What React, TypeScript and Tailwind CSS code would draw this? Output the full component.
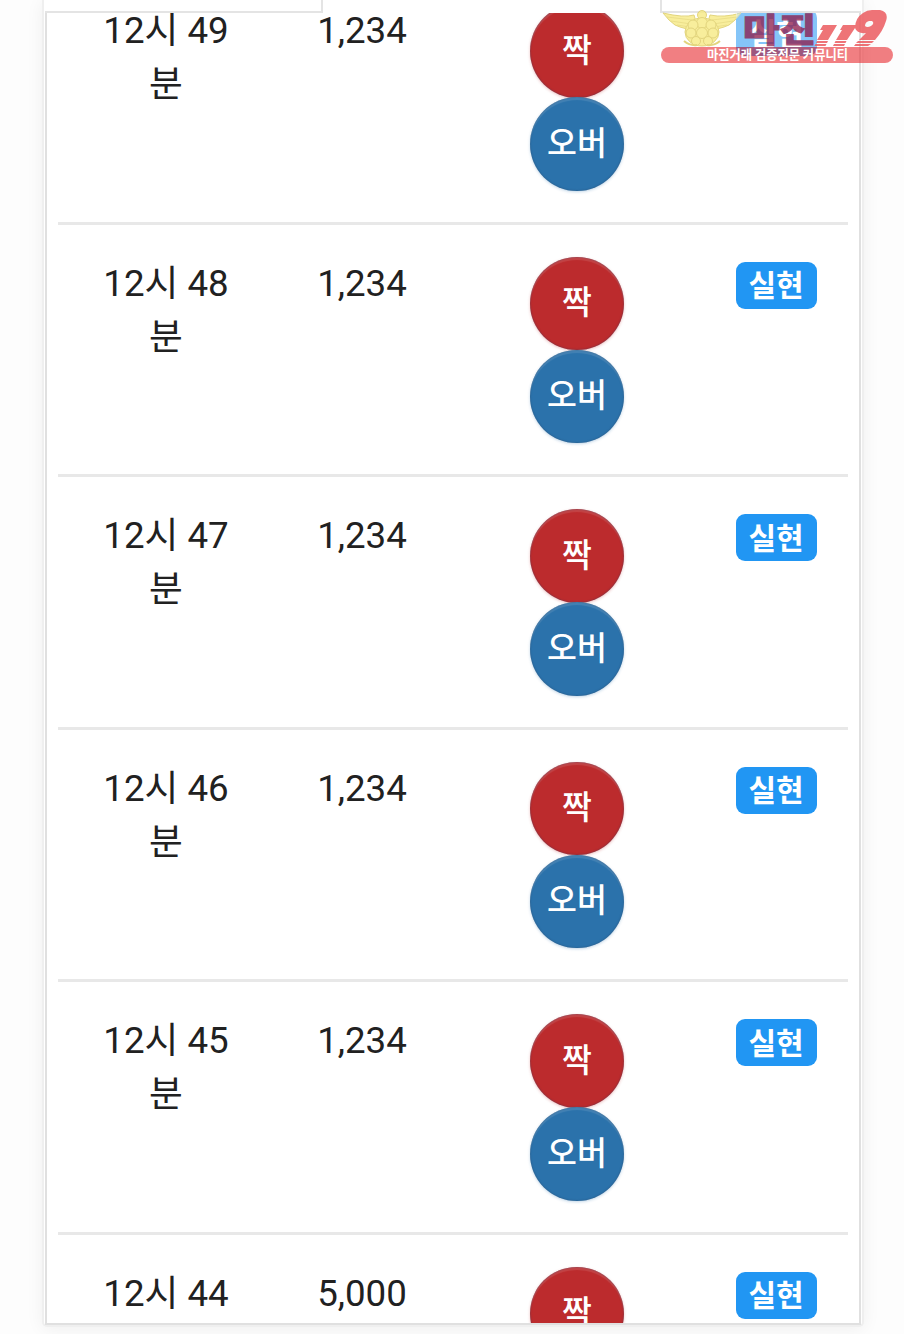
import React from 'react';

interface Entry {
  minute: number;
  amount: string;
}

const ENTRIES: Entry[] = [
  { minute: 49, amount: '1,234' },
  { minute: 48, amount: '1,234' },
  { minute: 47, amount: '1,234' },
  { minute: 46, amount: '1,234' },
  { minute: 45, amount: '1,234' },
  { minute: 44, amount: '5,000' },
];

const Ball: React.FC<{ className: string; children: React.ReactNode }> = ({ className, children }) => (
  <div className={`flex h-[93.5px] w-[94px] shrink-0 items-center justify-center rounded-full pb-[6px] font-["Noto_Sans_CJK_KR",sans-serif] text-[32.5px] font-medium leading-none text-white ${className}`}>
    {children}
  </div>
);

const Row: React.FC<{ entry: Entry }> = ({ entry }) => (
  <div className="grid h-[252.5px] shrink-0 grid-cols-[216px_176px_254px_144px] border-b-[3px] border-[#e8e8e8] pt-[32px] text-center text-[36.7px] leading-[54px] text-[#212121]">
    <div>
      12시 {entry.minute}
      {entry.minute > 44 && (
        <>
          <br />분
        </>
      )}
    </div>
    <div>{entry.amount}</div>
    <div className="flex flex-col items-center">
      <Ball className="bg-[#bc2b2d] shadow-[0_1px_3px_rgba(188,43,45,0.3),inset_0_3px_1px_rgba(255,255,255,0.12),inset_0_0_2px_rgba(30,60,100,0.6)]">짝</Ball>
      {entry.minute > 44 && (
        <Ball className="-mt-[0.5px] bg-[#2b72ab] shadow-[0_1px_3px_rgba(43,114,171,0.3),inset_0_3px_1px_rgba(255,255,255,0.12),inset_0_0_2px_rgba(40,60,90,0.6)]">오버</Ball>
      )}
    </div>
    <div className="flex items-start justify-center pt-[5px]">
      <span className="flex h-[47px] w-[81px] items-center justify-center rounded-[9px] bg-[#2196f3] pt-[2px] text-[30px] font-bold leading-none text-white">
        실현
      </span>
    </div>
  </div>
);

const Watermark: React.FC = () => (
  <svg className="absolute left-[655px] top-[4px] h-[62px] w-[245px]" viewBox="655 4 245 62">
    {/* winged emblem */}
    <g fill="#f7ea84" stroke="#dccb5e" strokeWidth="1" opacity="0.8">
      <path d="M663 13 Q684 18 694 15 L698 29 L687 29 L680 27 L675 25 L669 20 Z" />
      <path d="M741 13 Q724 18 710 15 L706 29 L717 29 L724 27 L729 25 L735 20 Z" />
      <path d="M667 17 L692 20 M671 21 L691 24 M677 25 L690 27 M737 17 L712 20 M733 21 L713 24 M727 25 L714 27" fill="none" strokeWidth="0.6" />
      <ellipse cx="702" cy="32" rx="17" ry="14" />
      <circle cx="702" cy="15" r="4.5" />
      <circle cx="702" cy="23" r="5.5" />
      <circle cx="693" cy="25" r="5" />
      <circle cx="711" cy="25" r="5" />
      <circle cx="691" cy="33" r="5" />
      <circle cx="702" cy="33" r="5.5" />
      <circle cx="713" cy="33" r="5" />
      <circle cx="696" cy="41" r="4.5" />
      <circle cx="708" cy="41" r="4.5" />
      <path d="M684 41 Q690 46 697 45 M720 41 Q714 46 707 45" fill="none" strokeWidth="2" />
    </g>
    {/* pale backing of the wordmark */}
    <path d="M736 13 H817 V47 H736 Z" fill="#fff" opacity="0.45" />
    <rect x="661" y="47" width="232" height="16" rx="8" fill="#e93035" opacity="0.62" />
    <text x="743" y="0" transform="translate(0 42) scale(1 0.87)" fontSize="38" fontWeight="900" textLength="73" lengthAdjust="spacingAndGlyphs" fill="#8c1848" stroke="#8c1848" strokeWidth="1.2" opacity="0.75" className="font-['Noto_Sans_CJK_KR',sans-serif]">
      마진
    </text>
    {/* slanted 119 with speed lines */}
    <g fill="#ec5c60" opacity="0.85">
      <path d="M823 25 H837 L828 40 H817 L823 30 H820 Z" />
      <path d="M843 25 H857 L847 40 H836 L842 30 H840 Z" />
      <path d="M817 41 H828 L827 43 H816 Z M815.5 44 H826.5 L825.5 46 H814.5 Z M835.5 41 H846.5 L845.5 43 H834.5 Z M834 44 H845 L844 46 H833 Z" />
      <path fillRule="evenodd" d="M872 10 H880 Q889 12 886 21 Q883 31 875 40 H859 L866 33 Q857 34 855 28 Q855 18 863 13 Q867 10 872 10 Z M869 21 Q865 22 865 26 Q867 28 871 26 Q875 23 872 21 Z" />
      <path d="M858 41 H874 L872 43 H856 Z M855.5 44 H871 L868 46 H854 Z" />
    </g>
    <text x="707" y="59" fontSize="13" fontWeight="700" textLength="141" lengthAdjust="spacingAndGlyphs" fill="#fff" className="font-['Noto_Sans_CJK_KR',sans-serif]">
      마진거래 검증전문 커뮤니티
    </text>
  </svg>
);

const App: React.FC = () => (
  <div className="h-[1334px] w-[904px] overflow-hidden bg-[#fdfdfd] font-[Roboto,'Noto_Sans_CJK_KR',sans-serif]">
    <div className="ml-[42px] h-[1327px] w-[822px] rounded-b-[5px] border-x-2 border-b-2 border-[#efefef] bg-white px-px shadow-[0_2px_18px_rgba(0,0,0,0.06)]">
      {/* bottoms of the header fields */}
      <div className="flex h-[13px] justify-between">
        <div className="w-[278px] border-b-2 border-r-2 border-[#e4e4e4]" />
        <div className="w-[201px] border-b-2 border-l-2 border-[#e4e4e4]" />
      </div>
      <div className="flex h-[1312px] flex-col overflow-hidden border-x-2 border-b-2 border-[#e0e0e0]">
        <div className="-mt-[40.75px] px-[11px]">
          {ENTRIES.map(entry => (
            <Row key={entry.minute} entry={entry} />
          ))}
        </div>
      </div>
    </div>
    <Watermark />
  </div>
);

export default App;
